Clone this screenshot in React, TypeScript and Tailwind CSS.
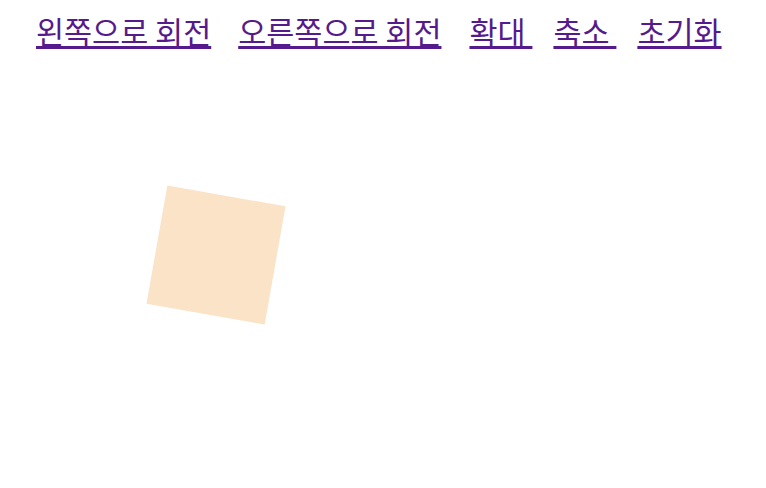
export default function App() {
  const links = [
    { label: "왼쪽으로 회전", gap: "mr-[27px]" },
    { label: "오른쪽으로 회전", gap: "mr-[28px]" },
    { label: "확대 ", gap: "mr-[21px]" },
    { label: "축소 ", gap: "mr-[21px]" },
    { label: "초기화", gap: "" },
  ];
  return (
    <div className="h-[488px] w-[766px] bg-white font-['Noto_Sans_CJK_KR',sans-serif]">
      <nav className="flex pl-[36px] pt-[7px] text-[30.5px] leading-[48px] text-[#551a8b]">
        {links.map((l) => (
          <a key={l.label} href="#" className={`whitespace-pre underline ${l.gap}`}>
            {l.label}
          </a>
        ))}
      </nav>
      <div className="pl-[156px] pt-[140px]">
        <div className="h-[120px] w-[120px] rotate-[10deg] bg-[#fae3c7]" />
      </div>
    </div>
  );
}
